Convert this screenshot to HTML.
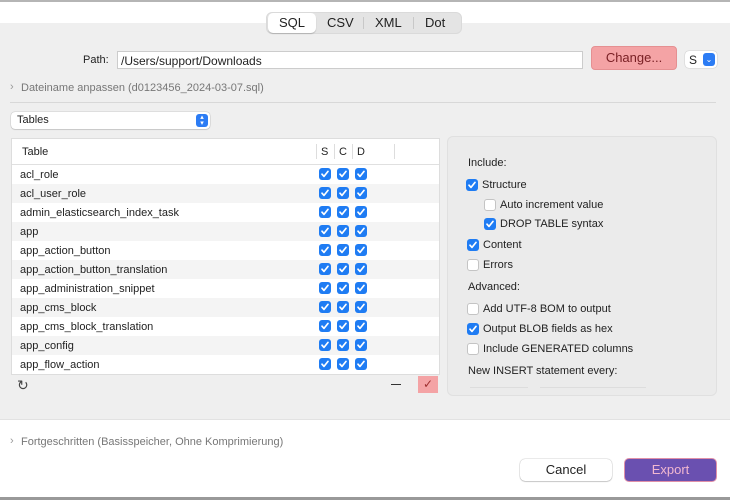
<!DOCTYPE html><html><head><style>
*{margin:0;padding:0;box-sizing:border-box}
body{width:730px;height:500px;background:#efefef;font-family:"Liberation Sans",sans-serif;font-size:11px;color:#222;position:relative;overflow:hidden}
.a{position:absolute;white-space:nowrap}
.cb{position:absolute;width:12px;height:12px;border-radius:3px;background:#1f7cf3}
.cb svg{position:absolute;left:1px;top:1px}
.ub{position:absolute;width:12px;height:12px;border-radius:3px;background:#fff;border:1px solid #c4c4c4}
.row{position:absolute;left:12px;width:427px;height:19px}
.row span{position:absolute;left:8px;top:4px}
</style></head><body>
<div class="a" style="left:0;top:0;width:730px;height:2px;background:#b5b5b5"></div>
<div class="a" style="left:0;top:2px;width:730px;height:21px;background:#fff"></div>
<div class="a" style="left:266px;top:12px;width:196px;height:22px;background:#e4e4e4;border-radius:6px;border:1px solid #dadada"></div>
<div class="a" style="left:268px;top:13px;width:48px;height:20px;background:#fff;border-radius:5px;box-shadow:0 1px 1px rgba(0,0,0,.2)"></div>
<div class="a" style="left:279px;top:15px;font-size:13px">SQL</div>
<div class="a" style="left:327px;top:15px;font-size:13px">CSV</div>
<div class="a" style="left:363px;top:17px;width:1px;height:12px;background:#c8c8c8"></div>
<div class="a" style="left:375px;top:15px;font-size:13px">XML</div>
<div class="a" style="left:413px;top:17px;width:1px;height:12px;background:#c8c8c8"></div>
<div class="a" style="left:425px;top:15px;font-size:13px">Dot</div>
<div class="a" style="left:83px;top:54px">Path:</div>
<div class="a" style="left:117px;top:51px;width:466px;height:18px;background:#fff;border:1px solid #ccc;padding:2px 3px;font-size:12px">/Users/support/Downloads</div>
<div class="a" style="left:591px;top:46px;width:86px;height:24px;background:#f4a3a5;border:1px solid #e59092;border-radius:4px;color:#7a2025;font-size:13px;text-align:center;line-height:22px">Change...</div>
<div class="a" style="left:685px;top:51px;width:32px;height:17px;background:#fff;border-radius:4px;box-shadow:0 0 1px rgba(0,0,0,.4);padding:2px 4px;font-size:12px">S</div>
<div class="a" style="left:703px;top:53px;width:12px;height:13px;background:#2c7cf4;border-radius:3px;color:#fff;font-size:8px;text-align:center;line-height:13px">⌄</div>
<div class="a" style="left:10px;top:81px;color:#999">›</div>
<div class="a" style="left:21px;top:82px;color:#777">Dateiname anpassen (d0123456_2024-03-07.sql)</div>
<div class="a" style="left:10px;top:102px;width:706px;height:1px;background:#d8d8d8"></div>
<div class="a" style="left:11px;top:112px;width:199px;height:17px;background:#fff;border-radius:4px;box-shadow:0 0 1px rgba(0,0,0,.45),0 1px 1px rgba(0,0,0,.1);padding:2px 6px">Tables</div>
<div class="a" style="left:196px;top:114px;width:12px;height:13px;background:#2c7cf4;border-radius:3px;color:#fff;font-size:7px;text-align:center;line-height:6px;padding-top:1px">▴<br>▾</div>
<div class="a" style="left:11px;top:138px;width:429px;height:237px;background:#fff;border:1px solid #ddd"></div>
<div class="a" style="left:12px;top:164px;width:427px;height:1px;background:#e0e0e0"></div>
<div class="a" style="left:22px;top:146px">Table</div>
<div class="a" style="left:316px;top:144px;width:1px;height:15px;background:#ddd"></div>
<div class="a" style="left:334px;top:144px;width:1px;height:15px;background:#ddd"></div>
<div class="a" style="left:352px;top:144px;width:1px;height:15px;background:#ddd"></div>
<div class="a" style="left:394px;top:144px;width:1px;height:15px;background:#ddd"></div>
<div class="a" style="left:321px;top:146px">S</div>
<div class="a" style="left:339px;top:146px">C</div>
<div class="a" style="left:357px;top:146px">D</div>
<div id="rows"></div>
<div class="a" style="left:17px;top:377px;font-size:14px;color:#444">↻</div>
<div class="a" style="left:391px;top:384px;width:10px;height:1px;background:#333"></div>
<div class="a" style="left:418px;top:376px;width:20px;height:17px;background:#f4a3a5;color:#a03030;text-align:center;font-size:12px;line-height:17px">✓</div>
<div class="a" style="left:447px;top:136px;width:270px;height:260px;background:#ebebeb;border:1px solid #e0e0e0;border-radius:6px"></div>
<div class="a" style="left:468px;top:157px">Include:</div>
<div class="cb s" style="left:466px;top:179px"></div><div class="a" style="left:482px;top:179px">Structure</div>
<div class="ub" style="left:484px;top:199px"></div><div class="a" style="left:500px;top:199px">Auto increment value</div>
<div class="cb s" style="left:484px;top:218px"></div><div class="a" style="left:500px;top:218px">DROP TABLE syntax</div>
<div class="cb s" style="left:467px;top:239px"></div><div class="a" style="left:483px;top:239px">Content</div>
<div class="ub" style="left:467px;top:259px"></div><div class="a" style="left:483px;top:259px">Errors</div>
<div class="a" style="left:468px;top:281px">Advanced:</div>
<div class="ub" style="left:467px;top:303px"></div><div class="a" style="left:483px;top:303px">Add UTF-8 BOM to output</div>
<div class="cb s" style="left:467px;top:323px"></div><div class="a" style="left:483px;top:323px">Output BLOB fields as hex</div>
<div class="ub" style="left:467px;top:343px"></div><div class="a" style="left:483px;top:343px">Include GENERATED columns</div>
<div class="a" style="left:468px;top:365px">New INSERT statement every:</div>
<div class="a" style="left:470px;top:387px;width:58px;height:1px;background:#ddd"></div>
<div class="a" style="left:540px;top:387px;width:106px;height:1px;background:#ddd"></div>
<div class="a" style="left:0;top:419px;width:730px;height:81px;background:#fff;border-top:1px solid #e2e2e2"></div>
<div class="a" style="left:10px;top:435px;color:#999">›</div>
<div class="a" style="left:21px;top:436px;color:#777">Fortgeschritten (Basisspeicher, Ohne Komprimierung)</div>
<div class="a" style="left:520px;top:459px;width:92px;height:22px;background:#fff;border-radius:5px;box-shadow:0 0 1px rgba(0,0,0,.5),0 1px 1px rgba(0,0,0,.15);text-align:center;line-height:22px;font-size:13px">Cancel</div>
<div class="a" style="left:624px;top:458px;width:93px;height:24px;background:#6a50b0;border:1px solid #e090a8;border-radius:5px;text-align:center;line-height:22px;font-size:13px;color:#f2b8d0">Export</div>
<div class="a" style="left:0;top:497px;width:730px;height:3px;background:#999"></div>
<script>
var n=["acl_role","acl_user_role","admin_elasticsearch_index_task","app","app_action_button","app_action_button_translation","app_administration_snippet","app_cms_block","app_cms_block_translation","app_config","app_flow_action"];
var ck='<svg width="10" height="10" viewBox="0 0 10 10"><path d="M2 5.2l2 2.2 4-5" stroke="#fff" stroke-width="1.7" fill="none" stroke-linecap="round" stroke-linejoin="round"/></svg>';
var h="";n.forEach(function(t,i){var y=165+i*19;h+='<div class="row" style="top:'+y+'px;background:'+(i%2?'#f4f4f4':'#fff')+'"><span>'+t+'</span></div>';[319,337,355].forEach(function(x){h+='<div class="cb" style="left:'+x+'px;top:'+(y+3)+'px">'+ck+'</div>'})});
document.getElementById("rows").innerHTML=h;
document.querySelectorAll(".cb.s").forEach(function(e){e.innerHTML=ck});
</script>
</body></html>
